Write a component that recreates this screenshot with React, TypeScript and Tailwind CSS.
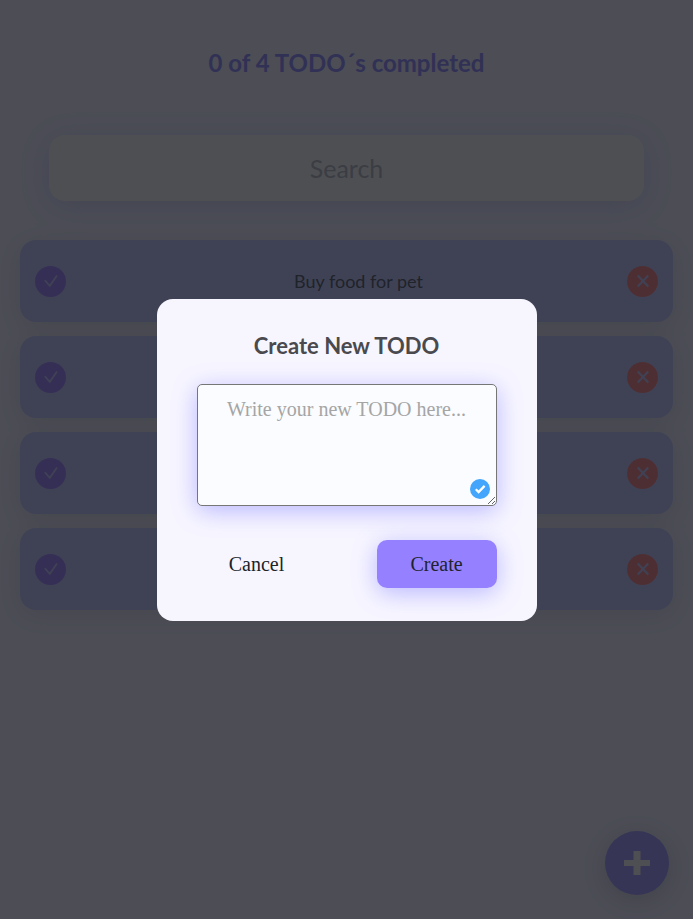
import { useState } from "react";

const todos = ["Buy food for pet", "", "", ""];

function TodoItem({ text }: { text: string }) {
  return (
    <li className="flex h-[82px] items-center rounded-[16px] bg-[#babcff] px-[15px] shadow-[0_5px_25px_rgba(32,35,41,0.15)]">
      <button aria-label="Complete" className="flex size-[31px] items-center justify-center rounded-full bg-[#8c60ff]">
        <svg viewBox="0 0 16 16" className="size-4" fill="none" stroke="#babcff" strokeWidth="1.7">
          <path d="M1.8 7.2 6.8 12.8 14 2.6" />
        </svg>
      </button>
      <p className="flex-1 pl-6 text-center text-[18px] leading-6">{text}</p>
      <button aria-label="Delete" className="flex size-[31px] items-center justify-center rounded-full bg-[#ff6058]">
        <svg viewBox="0 0 16 16" className="size-4" fill="none" stroke="#babcff" strokeWidth="1.9">
          <path d="M2.8 2.5 13.2 13.5M13.2 2.5 2.8 13.5" />
        </svg>
      </button>
    </li>
  );
}

export default function App() {
  const [text, setText] = useState("");
  return (
    <div className="min-h-screen bg-[#f8f4ff] font-['Lato',sans-serif] text-[#202329]">
      <main className="pt-[47px]">
        <h1 className="text-center text-[24px] leading-8 font-bold text-[#7468ff]">0 of 4 TODO´s completed</h1>
        <div className="mx-[49px] mt-14">
          <input
            aria-label="Search"
            placeholder="Search"
            className="block h-[66px] w-full rounded-[16px] bg-[#fffff6] text-center text-[25px] shadow-[0_5px_30px_rgba(95,110,230,0.3)] placeholder:text-[#a5a5a7] placeholder:opacity-100"
          />
        </div>
        <ul className="mx-5 mt-[39px] flex flex-col gap-[14px]">
          {todos.map((t, i) => (
            <TodoItem key={i} text={t} />
          ))}
        </ul>
      </main>
      <button aria-label="Add" className="fixed right-6 bottom-6 flex size-16 items-center justify-center rounded-full bg-[#8c7cff] shadow-[0_5px_25px_rgba(32,35,41,0.25)]">
        <svg viewBox="0 0 26 24" className="h-6 w-[26px]" fill="#fffff6">
          <path d="M9.5 0h7v9H26v6h-9.500v9h-7v-9H0V9h9.500z" />
        </svg>
      </button>
      <div className="fixed inset-0 flex items-center justify-center bg-[rgba(32,35,43,0.8)]">
        <form
          role="dialog"
          aria-labelledby="dialog-title"
          className="flex w-[380px] flex-col rounded-[16px] bg-[#f7f6ff] px-10 py-[33px] font-['Liberation_Serif',serif]"
        >
          <label id="dialog-title" htmlFor="new-todo" className="text-center font-['Lato',sans-serif] text-[22px] leading-7 font-bold text-[#4a4a4e]">
            Create New TODO
          </label>
          <div className="relative mt-6">
            <textarea
              id="new-todo"
              value={text}
              onChange={(e) => setText(e.target.value)}
              placeholder="Write your new TODO here..."
              className="block h-[122px] w-full resize rounded-[5px] border border-[#767676] bg-[#fafcff] p-3 text-center text-[20px] leading-6 shadow-[0_5px_25px_rgba(95,90,255,0.4)] placeholder:text-[#a5a5a5] placeholder:opacity-100"
            />
            <svg viewBox="0 0 20 20" className="pointer-events-none absolute right-[7px] bottom-[7px] size-5" fill="none">
              <circle cx="10" cy="10" r="10" fill="#43a5fc" />
              <path d="m5.800 10.300 2.800 2.800 6-6.200" stroke="#fff" strokeWidth="2.3" />
            </svg>
          </div>
          <div className="mt-[34px] flex justify-between text-[20px] leading-6">
            <button type="button" className="h-12 w-[120px]">Cancel</button>
            <button type="button" className="h-12 w-[120px] rounded-[10px] bg-[#9580ff] shadow-[0_5px_25px_rgba(95,90,255,0.4)]">Create</button>
          </div>
        </form>
      </div>
    </div>
  );
}
